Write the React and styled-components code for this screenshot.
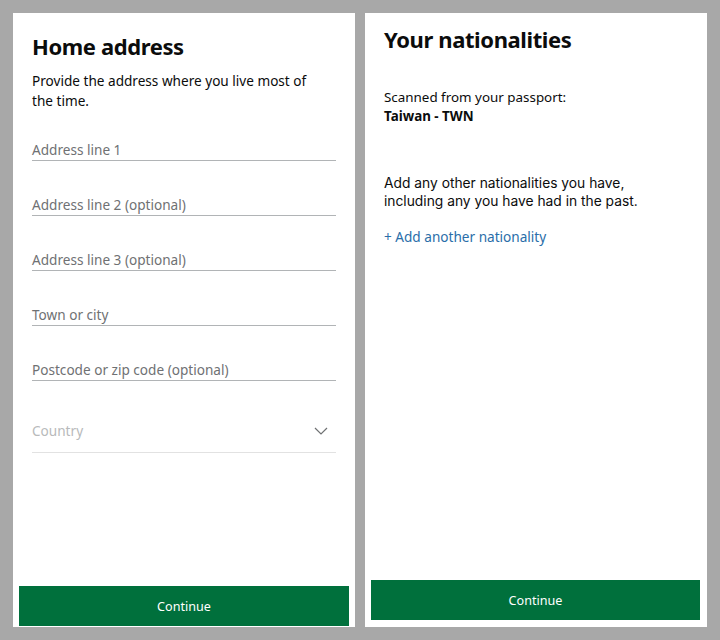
import styled, { createGlobalStyle } from 'styled-components';

const GlobalStyle = createGlobalStyle`
  html, body {
    margin: 0;
    padding: 0;
    background: #a8a8a8;
  }
  * {
    box-sizing: border-box;
  }
`;

const Screens = styled.div`
  display: flex;
  gap: 10px;
  padding: 13px;
  height: 640px;
  font-family: 'Noto Sans', 'Open Sans', sans-serif;
  color: #0b0c0c;
`;

const Panel = styled.section`
  width: 342px;
  height: 614px;
  background: #ffffff;
  display: flex;
  flex-direction: column;
`;

const Content = styled.div`
  padding: ${({ $top }) => $top}px 19px 0;
  flex: 1;
`;

const Title = styled.h1`
  margin: 0;
  font-size: 22px;
  line-height: 28px;
  font-weight: 700;
  letter-spacing: -0.4px;
`;

const Lead = styled.p`
  margin: 11px 0 0;
  max-width: 285px;
  font-size: 13.6px;
  line-height: 20px;
`;

const Field = styled.div`
  margin-top: ${({ $mt }) => $mt}px;
  display: flex;
  align-items: center;
  justify-content: space-between;
  padding-bottom: ${({ $pb }) => $pb || 0}px;
  border-bottom: 1px solid ${({ $muted }) => ($muted ? '#e2e2e2' : '#b1b4b6')};
  font-size: 13.6px;
  line-height: 20px;
  color: ${({ $muted }) => ($muted ? '#b8babb' : '#6f7173')};
`;

const Chevron = styled.svg`
  width: 14px;
  height: 8px;
  margin-right: 8px;
`;

const Scanned = styled.div`
  margin-top: 35px;
  font-size: 13.4px;
  line-height: 19px;
`;

const Strong = styled.div`
  font-weight: 700;
`;

const Note = styled.p`
  margin: 48px 0 0;
  max-width: 270px;
  font-family: Inter, 'Liberation Sans', sans-serif;
  font-size: 13.8px;
  line-height: 18px;
`;

const AddLink = styled.a`
  display: inline-block;
  margin-top: 17px;
  font-size: 13.6px;
  line-height: 20px;
  color: #2a6ea9;
  text-decoration: none;
`;

const Button = styled.button`
  margin: 0 ${({ $right }) => $right}px ${({ $bottom }) => $bottom}px 6px;
  height: 40px;
  border: 0;
  background: #00703c;
  color: #ffffff;
  font-family: 'Noto Sans', sans-serif;
  font-size: 12.6px;
`;

const fields = [
  'Address line 1',
  'Address line 2 (optional)',
  'Address line 3 (optional)',
  'Town or city',
  'Postcode or zip code (optional)',
];

function HomeAddress() {
  return (
    <Panel>
      <Content $top={19}>
        <Title>Home address</Title>
        <Lead>Provide the address where you live most of the time.</Lead>
        {fields.map((label, i) => (
          <Field key={label} $mt={i === 0 ? 29 : 34}>
            {label}
          </Field>
        ))}
        <Field $mt={40} $muted $pb={11}>
          Country
          <Chevron viewBox="0 0 14 8" fill="none" stroke="#6f7173" strokeWidth="1.2">
            <path d="M1 1l6 6 6-6" />
          </Chevron>
        </Field>
      </Content>
      <Button $right={6} $bottom={1}>Continue</Button>
    </Panel>
  );
}

function Nationalities() {
  return (
    <Panel>
      <Content $top={12}>
        <Title>Your nationalities</Title>
        <Scanned>
          Scanned from your passport:
          <Strong>Taiwan - TWN</Strong>
        </Scanned>
        <Note>Add any other nationalities you have, including any you have had in the past.</Note>
        <AddLink href="#">+ Add another nationality</AddLink>
      </Content>
      <Button $right={7} $bottom={7}>Continue</Button>
    </Panel>
  );
}

export default function App() {
  return (
    <>
      <GlobalStyle />
      <Screens>
        <HomeAddress />
        <Nationalities />
      </Screens>
    </>
  );
}
